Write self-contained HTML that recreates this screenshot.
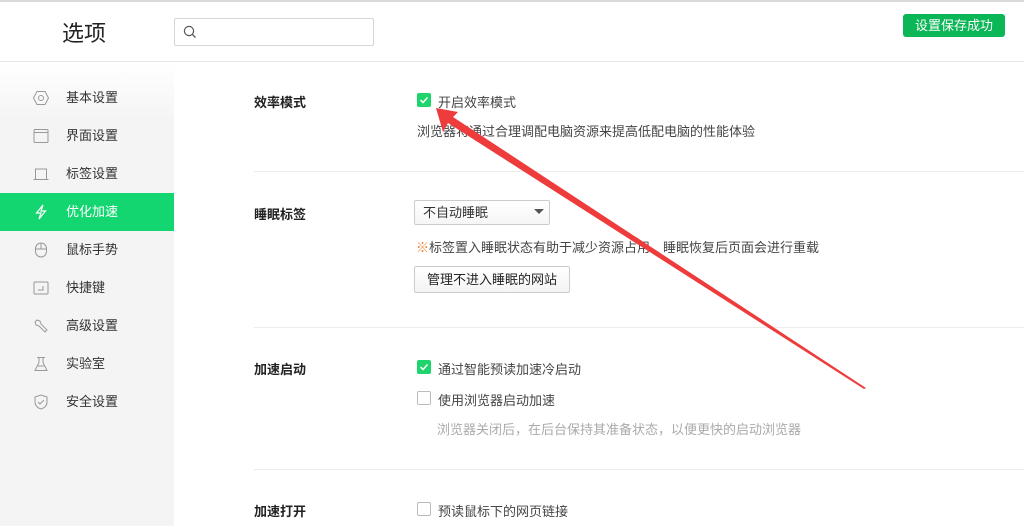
<!DOCTYPE html>
<html><head><meta charset="utf-8"><style>
*{margin:0;padding:0;box-sizing:border-box}
body{width:1024px;height:526px;overflow:hidden;background:#fff;font-family:"Liberation Sans","Noto Sans CJK SC",sans-serif;font-size:13px;color:#333;position:relative}
.a{position:absolute;white-space:nowrap}
.side{position:absolute;left:0;top:62px;width:174px;height:464px;background:linear-gradient(#fff,#f4f4f4 60px,#f4f4f4)}
.it{position:absolute;left:0;width:174px;height:38px;line-height:38px;padding-left:66px;color:#333}
.it svg{position:absolute;left:33px;top:11px}
.act{background:#13d670;color:#fff}
.lab{font-weight:bold;color:#222}
.cb{position:absolute;width:14px;height:14px;border:1px solid #bbb;border-radius:2px;background:#fff}
.cb.on{background:#1ed46c;border-color:#1ed46c}
.sep{position:absolute;left:254px;right:0;height:1px;background:#ececec}
</style></head><body>
<div class="a" style="left:0;top:0;width:1024px;height:2px;background:#d9d9d9"></div>
<div class="a" style="left:0;top:61px;width:1024px;height:1px;background:#e6e6e6"></div>
<div class="a" style="left:62px;top:16px;font-size:22px;color:#222">选项</div>
<div class="a" style="left:174px;top:18px;width:200px;height:28px;border:1px solid #d6d6d6;border-radius:2px"></div>
<svg class="a" style="left:183px;top:25px" width="14" height="14" viewBox="0 0 14 14"><circle cx="6" cy="6" r="4.6" fill="none" stroke="#555" stroke-width="1.2"/><path d="M9.4 9.4L12.5 12.5" stroke="#555" stroke-width="1.3"/></svg>
<div class="a" style="left:903px;top:14px;width:102px;height:23px;background:#0bb656;border-radius:3px;color:#fff;line-height:23px;text-align:center">设置保存成功</div>

<div class="side">
<div class="it" style="top:17px"><svg width="16" height="16" viewBox="0 0 16 16" fill="none" stroke="#999"><path d="M4 1.5h8l3.5 6.5-3.5 6.5h-8L.5 8z"/><circle cx="8" cy="8" r="2.5"/></svg>基本设置</div>
<div class="it" style="top:55px"><svg width="16" height="16" viewBox="0 0 16 16" fill="none" stroke="#999"><rect x="1" y="1.5" width="14" height="13" rx="1"/><path d="M1 4.5h14"/></svg>界面设置</div>
<div class="it" style="top:93px"><svg width="16" height="16" viewBox="0 0 16 16" fill="none" stroke="#999"><path d="M2.5 13V3h11v10M0.5 13.5h15"/></svg>标签设置</div>
<div class="it act" style="top:131px"><svg width="16" height="16" viewBox="0 0 16 16" fill="none" stroke="#fff" stroke-width="1.2"><path d="M10 1L3.5 9h4.5L6 15l6.5-8H8z"/></svg>优化加速</div>
<div class="it" style="top:169px"><svg width="16" height="16" viewBox="0 0 16 16" fill="none" stroke="#999"><rect x="2.5" y="1" width="11" height="14" rx="5.5"/><path d="M2.5 7h11M8 1v6"/></svg>鼠标手势</div>
<div class="it" style="top:207px"><svg width="16" height="16" viewBox="0 0 16 16" fill="none" stroke="#999"><rect x="1" y="2" width="14" height="12" rx="1"/><path d="M5 10h5V6"/></svg>快捷键</div>
<div class="it" style="top:245px"><svg width="16" height="16" viewBox="0 0 16 16" fill="none" stroke="#999"><path d="M2 4l2-2 3 1 1 3 6 6-2 2-6-6-3-1z"/></svg>高级设置</div>
<div class="it" style="top:283px"><svg width="16" height="16" viewBox="0 0 16 16" fill="none" stroke="#999"><path d="M4 1.5h8M6 1.5v5L2 14.5h12L10 6.5v-5M5 10h6"/></svg>实验室</div>
<div class="it" style="top:321px"><svg width="16" height="16" viewBox="0 0 16 16" fill="none" stroke="#999"><path d="M8 1l6 2v5c0 4-3 6-6 7-3-1-6-3-6-7V3z"/><path d="M5 8l2 2 4-4"/></svg>安全设置</div>
</div>

<div class="a lab" style="left:254px;top:92px">效率模式</div>
<div class="cb on" style="left:417px;top:93px"></div>
<svg class="a" style="left:418px;top:94px" width="12" height="12"><path d="M2.5 6l2.5 2.5 4.5-5" stroke="#fff" stroke-width="1.5" fill="none"/></svg>
<div class="a" style="left:438px;top:92px;color:#444">开启效率模式</div>
<div class="a" style="left:417px;top:121px;color:#444">浏览器将通过合理调配电脑资源来提高低配电脑的性能体验</div>
<div class="sep" style="top:171px"></div>

<div class="a lab" style="left:254px;top:204px">睡眠标签</div>
<div class="a" style="left:414px;top:200px;width:136px;height:25px;border:1px solid #ccc;border-radius:2px;background:linear-gradient(#fff,#f6f6f6);padding-left:8px;line-height:23px">不自动睡眠</div>
<svg class="a" style="left:534px;top:209px" width="10" height="6"><path d="M0 0h10L5 5z" fill="#555"/></svg>
<div class="a" style="left:416px;top:237px;color:#444"><span style="color:#f08030">※</span>标签置入睡眠状态有助于减少资源占用，睡眠恢复后页面会进行重载</div>
<div class="a" style="left:414px;top:266px;width:156px;height:27px;border:1px solid #ccc;border-radius:2px;background:linear-gradient(#fff,#f4f4f4);text-align:center;line-height:25px;color:#222">管理不进入睡眠的网站</div>
<div class="sep" style="top:327px"></div>

<div class="a lab" style="left:254px;top:359px">加速启动</div>
<div class="cb on" style="left:417px;top:360px"></div>
<svg class="a" style="left:418px;top:361px" width="12" height="12"><path d="M2.5 6l2.5 2.5 4.5-5" stroke="#fff" stroke-width="1.5" fill="none"/></svg>
<div class="a" style="left:438px;top:359px;color:#444">通过智能预读加速冷启动</div>
<div class="cb" style="left:417px;top:391px"></div>
<div class="a" style="left:438px;top:390px;color:#444">使用浏览器启动加速</div>
<div class="a" style="left:437px;top:419px;color:#aaa">浏览器关闭后，在后台保持其准备状态，以便更快的启动浏览器</div>
<div class="sep" style="top:469px"></div>

<div class="a lab" style="left:254px;top:501px">加速打开</div>
<div class="cb" style="left:417px;top:502px"></div>
<div class="a" style="left:438px;top:501px;color:#444">预读鼠标下的网页链接</div>

<svg class="a" style="left:0;top:0" width="1024" height="526"><polygon points="436,108 458,112 453,117 866,388 864,389 448,123 443,132" fill="#ee3b3b"/></svg>
</body></html>
